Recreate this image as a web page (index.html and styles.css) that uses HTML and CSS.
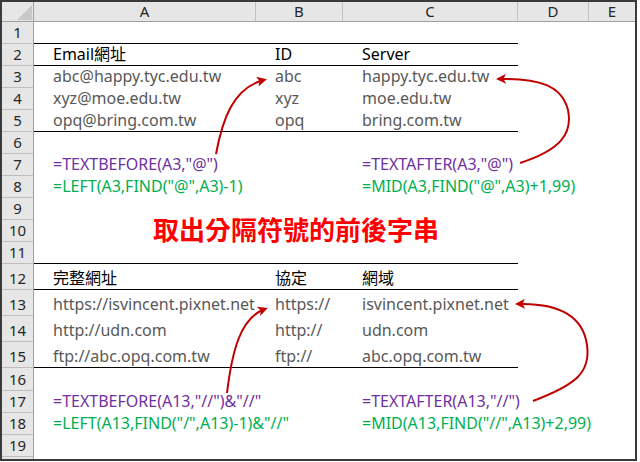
FILE: index.html
```html
<!DOCTYPE html>
<html lang="zh-Hant">
<head>
<meta charset="utf-8">
<title>取出分隔符號的前後字串</title>
<link rel="stylesheet" href="styles.css">
</head>
<body>
<div class="frame">
  <div class="sheet">
    <div class="corner"><svg width="20" height="20" viewBox="0 0 20 20"><polygon points="19,4 19,19 4,19" fill="#c9c9c9"/></svg></div>
    <div class="colhdr">A</div><div class="colhdr">B</div><div class="colhdr">C</div><div class="colhdr">D</div><div class="colhdr last">E</div>

    <div class="rowhdr">1</div><div class="c rule"></div><div class="c rule"></div><div class="c rule"></div><div class="c"></div><div class="c"></div>

    <div class="rowhdr">2</div><div class="c rule head">Email網址</div><div class="c rule head">ID</div><div class="c rule head">Server</div><div class="c"></div><div class="c"></div>

    <div class="rowhdr">3</div><div class="c data">abc@happy.tyc.edu.tw</div><div class="c data">abc</div><div class="c data">happy.tyc.edu.tw</div><div class="c"></div><div class="c"></div>

    <div class="rowhdr">4</div><div class="c data">xyz@moe.edu.tw</div><div class="c data">xyz</div><div class="c data">moe.edu.tw</div><div class="c"></div><div class="c"></div>

    <div class="rowhdr">5</div><div class="c rule data">opq@bring.com.tw</div><div class="c rule data">opq</div><div class="c rule data">bring.com.tw</div><div class="c"></div><div class="c"></div>

    <div class="rowhdr">6</div><div class="c"></div><div class="c"></div><div class="c"></div><div class="c"></div><div class="c"></div>

    <div class="rowhdr">7</div><div class="c purple">=TEXTBEFORE(A3,"@")</div><div class="c"></div><div class="c purple">=TEXTAFTER(A3,"@")</div><div class="c"></div><div class="c"></div>

    <div class="rowhdr">8</div><div class="c green">=LEFT(A3,FIND("@",A3)-1)</div><div class="c"></div><div class="c green">=MID(A3,FIND("@",A3)+1,99)</div><div class="c"></div><div class="c"></div>

    <div class="rowhdr">9</div><div class="c"></div><div class="c"></div><div class="c"></div><div class="c"></div><div class="c"></div>

    <div class="rowhdr">10</div><div class="c title">取出分隔符號的前後字串</div><div class="c"></div><div class="c"></div><div class="c"></div><div class="c"></div>

    <div class="rowhdr">11</div><div class="c rule"></div><div class="c rule"></div><div class="c rule"></div><div class="c"></div><div class="c"></div>

    <div class="rowhdr">12</div><div class="c rule head">完整網址</div><div class="c rule head">協定</div><div class="c rule head">網域</div><div class="c"></div><div class="c"></div>

    <div class="rowhdr">13</div><div class="c data">https://isvincent.pixnet.net</div><div class="c data">https://</div><div class="c data">isvincent.pixnet.net</div><div class="c"></div><div class="c"></div>

    <div class="rowhdr">14</div><div class="c data">http://udn.com</div><div class="c data">http://</div><div class="c data">udn.com</div><div class="c"></div><div class="c"></div>

    <div class="rowhdr">15</div><div class="c rule data">ftp://abc.opq.com.tw</div><div class="c rule data">ftp://</div><div class="c rule data">abc.opq.com.tw</div><div class="c"></div><div class="c"></div>

    <div class="rowhdr">16</div><div class="c"></div><div class="c"></div><div class="c"></div><div class="c"></div><div class="c"></div>

    <div class="rowhdr">17</div><div class="c purple">=TEXTBEFORE(A13,"//")&amp;"//"</div><div class="c"></div><div class="c purple">=TEXTAFTER(A13,"//")</div><div class="c"></div><div class="c"></div>

    <div class="rowhdr">18</div><div class="c green">=LEFT(A13,FIND("/",A13)-1)&amp;"//"</div><div class="c"></div><div class="c green">=MID(A13,FIND("//",A13)+2,99)</div><div class="c"></div><div class="c"></div>

    <div class="rowhdr">19</div><div class="c"></div><div class="c"></div><div class="c"></div><div class="c"></div><div class="c"></div>

    <div class="rowhdr"></div><div class="c"></div><div class="c"></div><div class="c"></div><div class="c"></div><div class="c"></div>
  </div>

  <svg class="arrows" width="637" height="461" viewBox="0 0 637 461">
    <defs>
      <marker id="ah" viewBox="0 0 10 10" refX="7" refY="5" markerWidth="5" markerHeight="5" orient="auto-start-reverse">
        <path d="M0,0 L10,5 L0,10 L2.5,5 z" fill="#c00000"/>
      </marker>
    </defs>
    <g fill="none" stroke="#c00000" stroke-width="2">
      <path d="M216,154 C222,122 232,88 264,80" marker-end="url(#ah)"/>
      <path d="M520,163 C560,150 573,134 568,110 C562,86 540,78 499,79" marker-end="url(#ah)"/>
      <path d="M227,393 C232,352 240,318 265,309" marker-end="url(#ah)"/>
      <path d="M533,401 C575,385 591,373 587,345 C583,316 560,303 518,304" marker-end="url(#ah)"/>
    </g>
  </svg>
</div>
</body>
</html>
```

FILE: styles.css
```css
html, body {
  margin: 0;
  padding: 0;
  background: #ffffff;
}

.frame {
  position: relative;
  width: 633px;
  height: 457px;
  border: 2px solid #3a3a3a;
  overflow: hidden;
  background: #ffffff;
}

.sheet {
  display: grid;
  grid-template-columns: 32px 222px 87px 175px 71px 46px;
  grid-template-rows: 20px repeat(11, 22px) repeat(4, 26px) 23px repeat(3, 22px) 22px;
  font-family: "Noto Sans", "Noto Sans CJK TC", sans-serif;
  font-size: 16px;
}

.corner {
  background: #e6e6e6;
  border-right: 1px solid #a0a0a0;
  border-bottom: 1px solid #a0a0a0;
  box-sizing: border-box;
  display: flex;
  align-items: flex-end;
  justify-content: flex-end;
}

.corner svg { display: block; }

.colhdr {
  box-sizing: border-box;
  background: #e6e6e6;
  border-right: 1px solid #c2c2c2;
  border-bottom: 1px solid #a0a0a0;
  color: #262626;
  font-size: 15px;
  display: flex;
  align-items: center;
  justify-content: center;
  line-height: 1;
}

.colhdr.last { border-right: none; }

.rowhdr {
  box-sizing: border-box;
  background: #e6e6e6;
  border-right: 1px solid #a0a0a0;
  border-bottom: 1px solid #bdbdbd;
  color: #262626;
  font-size: 15px;
  display: flex;
  align-items: flex-end;
  justify-content: center;
  padding-bottom: 3px;
  line-height: 1;
}

.c {
  box-sizing: border-box;
  border-bottom: 1px solid transparent;
  padding-left: 19px;
  padding-bottom: 3px;
  white-space: nowrap;
  display: flex;
  align-items: flex-end;
  line-height: 1;
  overflow: visible;
  position: relative;
  z-index: 1;
}

.c.rule { border-bottom-color: #000000; }

.head { color: #000000; }
.data { color: #595959; }
.purple { color: #7030a0; }
.green { color: #00b050; }

.title {
  color: #ff0000;
  font-family: "Noto Sans CJK TC", sans-serif;
  font-weight: bold;
  font-size: 26px;
  padding-left: 119px;
  padding-bottom: 3px;
  align-items: center;
}

.arrows {
  position: absolute;
  left: -2px;
  top: -2px;
  pointer-events: none;
  z-index: 2;
}
```
